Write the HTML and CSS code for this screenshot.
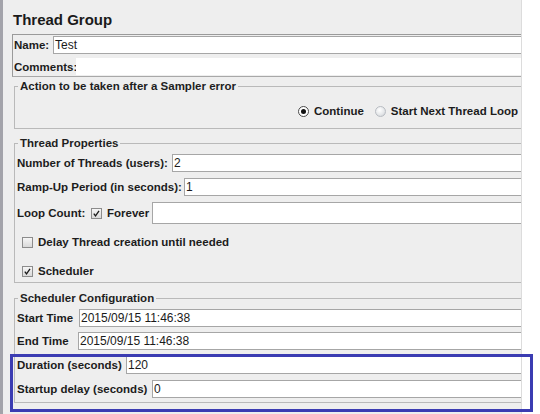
FILE: index.html
```html
<!DOCTYPE html>
<html>
<head>
<meta charset="utf-8">
<title>Thread Group</title>
<link rel="stylesheet" href="styles.css">
</head>
<body>
<div class="page">
  <h1 class="title">Thread Group</h1>

  <div class="name-panel">
    <div class="row name-row"><span class="lbl w-name">Name:</span><div class="field">Test</div></div>
    <div class="row comments-row"><span class="lbl w-comments">Comments:</span><div class="area"></div></div>
  </div>

  <div class="group g-action">
    <div class="group-title">Action to be taken after a Sampler error</div>
    <div class="radios">
      <span class="radio"><span class="rb on"></span>Continue</span>
      <span class="radio"><span class="rb"></span>Start Next Thread Loop</span>
    </div>
  </div>

  <div class="group g-thread">
    <div class="group-title">Thread Properties</div>
    <div class="row r1"><span class="lbl w-threads">Number of Threads (users):</span><div class="field">2</div></div>
    <div class="row r2"><span class="lbl w-ramp">Ramp-Up Period (in seconds):</span><div class="field">1</div></div>
    <div class="row r3">
      <span class="lbl w-loop">Loop Count:</span>
      <span class="cb"><svg viewBox="0 0 11 11" width="9" height="9"><path d="M2.2 5.6 L4.3 8.3 L8.6 2.4" fill="none" stroke="#1a1a1a" stroke-width="1.6"/></svg></span>
      <span class="lbl cb-text forever">Forever</span>
      <div class="field tall"></div>
    </div>
    <div class="row r4"><span class="cb"></span><span class="lbl cb-text">Delay Thread creation until needed</span></div>
    <div class="row r5"><span class="cb"><svg viewBox="0 0 11 11" width="9" height="9"><path d="M2.2 5.6 L4.3 8.3 L8.6 2.4" fill="none" stroke="#1a1a1a" stroke-width="1.6"/></svg></span><span class="lbl cb-text">Scheduler</span></div>
  </div>

  <div class="group g-sched">
    <div class="group-title">Scheduler Configuration</div>
    <div class="row s1"><span class="lbl w-start">Start Time</span><div class="field">2015/09/15 11:46:38</div></div>
    <div class="row s2"><span class="lbl w-end">End Time</span><div class="field">2015/09/15 11:46:38</div></div>
    <div class="row s3"><span class="lbl w-dur">Duration (seconds)</span><div class="field">120</div></div>
    <div class="row s4"><span class="lbl w-delay">Startup delay (seconds)</span><div class="field">0</div></div>
  </div>
</div>
<div class="highlight"></div>
</body>
</html>
```

FILE: styles.css
```css
html, body {
  margin: 0;
  padding: 0;
  background: #ffffff;
}
body {
  width: 540px;
  height: 414px;
  overflow: hidden;
  position: relative;
  font-family: "Liberation Sans", Arial, sans-serif;
  color: #1c1c1c;
}
.page {
  width: 522px;
  height: 414px;
  box-sizing: border-box;
  background: #eeeeee;
  border-left: 3px solid #a3a3aa;
  border-right: 1px solid #dcdcdc;
  overflow: hidden;
}
.title {
  margin: 11px 0 5px 10px;
  font-size: 15px;
  line-height: 18px;
  font-weight: bold;
  color: #1a1a1a;
}
.row {
  display: flex;
  align-items: center;
}
.lbl {
  font-size: 11.5px;
  font-weight: bold;
  white-space: nowrap;
  flex: none;
}
.field {
  flex: 1;
  height: 18px;
  box-sizing: border-box;
  background: #ffffff;
  border: 1px solid #a6a6a6;
  border-right: none;
  padding-left: 1px;
  display: flex;
  align-items: center;
  font-size: 12px;
  color: #1a1a1a;
  white-space: nowrap;
}
.field.tall {
  height: 22px;
}

/* name panel */
.name-panel {
  margin-left: 9px;
  border-top: 1px solid #9a9a9a;
  border-left: 1px solid #9a9a9a;
  border-bottom: 1px solid #a8a8a8;
  padding-left: 1px;
  padding-top: 1px;
}
.w-name { width: 39px; }
.w-comments { width: 62px; }
.comments-row { margin-top: 4px; height: 18px; }
.area {
  flex: 1;
  height: 17px;
  align-self: flex-start;
  background: #ffffff;
}

/* titled groups */
.group {
  margin-left: 11px;
  border: 1px solid #b9b9b9;
  border-right: none;
}
.group-title {
  width: fit-content;
  margin: -8px 0 0 3px;
  padding: 0 2px;
  line-height: 14px;
  font-size: 11.5px;
  font-weight: bold;
  background: #eeeeee;
  color: #1e1e1e;
  white-space: nowrap;
}
.group .row {
  padding-left: 2px;
}

.g-action {
  margin-top: 9px;
  padding-bottom: 8px;
}
.radios {
  margin-top: 9px;
  height: 18px;
  padding-left: 283px;
  display: flex;
  align-items: center;
}
.radio {
  display: flex;
  align-items: center;
  font-size: 11.5px;
  font-weight: bold;
  white-space: nowrap;
  margin-right: 11px;
}
.rb {
  width: 11px;
  height: 11px;
  box-sizing: border-box;
  border-radius: 50%;
  border: 1px solid #b8bcc2;
  background: radial-gradient(circle at 40% 35%, #ffffff 0%, #e6e8ea 55%, #c9cdd2 100%);
  margin-right: 5px;
  display: flex;
  align-items: center;
  justify-content: center;
}
.rb.on {
  border-color: #4a4a4a;
  background: #ffffff;
}
.rb.on::after {
  content: "";
  width: 5px;
  height: 5px;
  border-radius: 50%;
  background: #111111;
}

.g-thread {
  margin-top: 14px;
  padding-bottom: 1px;
}
.r1 { margin-top: 4px; }
.r2 { margin-top: 6px; }
.r3 { margin-top: 6px; }
.r4 { margin-top: 8px; height: 20px; }
.r5 { margin-top: 9px; height: 20px; }
.w-threads { width: 155px; }
.w-ramp { width: 167px; }
.w-loop { width: 74px; }
.cb {
  width: 11px;
  height: 11px;
  box-sizing: border-box;
  border: 1px solid #8c8c8c;
  background: linear-gradient(#f6f6f6, #d9d9d9);
  display: flex;
  align-items: center;
  justify-content: center;
  flex: none;
}
.r4 .cb, .r5 .cb {
  margin-left: 5px;
}
.cb-text {
  margin-left: 5px;
}
.forever {
  width: 45px;
}

.g-sched {
  margin-top: 15px;
  padding-bottom: 4px;
}
.s1 { margin-top: 4px; }
.s2 { margin-top: 5px; }
.s3 { margin-top: 6px; }
.s4 { margin-top: 6px; }
.w-start { width: 62px; }
.w-end { width: 61px; }
.w-dur { width: 109px; }
.w-delay { width: 135px; }

/* annotation overlay */
.highlight {
  position: absolute;
  left: 10px;
  top: 354px;
  width: 523px;
  height: 58px;
  box-sizing: border-box;
  border: 3px solid #3b3cb2;
}
```
